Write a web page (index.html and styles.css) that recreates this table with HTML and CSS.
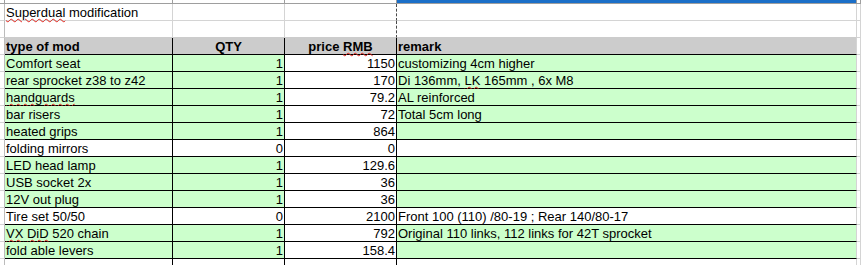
FILE: index.html
```html
<!DOCTYPE html>
<html>
<head>
<meta charset="utf-8">
<link rel="stylesheet" href="styles.css">
</head>
<body>
<div class="sheet">
  <div class="row top">
    <div class="cell gut"></div>
    <div class="cell ca"></div>
    <div class="cell cb"></div>
    <div class="cell cc brk"></div>
    <div class="cell cd sel"></div>
    <div class="cell ce"></div>
  </div>
  <div class="row">
    <div class="cell gut"></div>
    <div class="cell ca"><span class="sp">Superdual</span>&nbsp;modification</div>
    <div class="cell cb"></div>
    <div class="cell cc brk"></div>
    <div class="cell cd"></div>
    <div class="cell ce"></div>
  </div>
  <div class="row pre">
    <div class="cell gut"></div>
    <div class="cell ca"></div>
    <div class="cell cb"></div>
    <div class="cell cc brk"></div>
    <div class="cell cd"></div>
    <div class="cell ce"></div>
  </div>
  <div class="row hd">
    <div class="cell gut"></div>
    <div class="cell ca">type of mod</div>
    <div class="cell cb ctr">QTY</div>
    <div class="cell cc ctr">price&nbsp;<span class="sp">RMB</span></div>
    <div class="cell cd">remark</div>
    <div class="cell ce"></div>
  </div>
  <div class="row dr g">
    <div class="cell gut"></div>
    <div class="cell ca">Comfort seat</div>
    <div class="cell cb num">1</div>
    <div class="cell cc num">1150</div>
    <div class="cell cd">customizing 4cm higher</div>
    <div class="cell ce"></div>
  </div>
  <div class="row dr g">
    <div class="cell gut"></div>
    <div class="cell ca">rear sprocket z38 to z42</div>
    <div class="cell cb num">1</div>
    <div class="cell cc num">170</div>
    <div class="cell cd">Di 136mm,&nbsp;<span class="sp">LK</span>&nbsp;165mm , 6x M8</div>
    <div class="cell ce"></div>
  </div>
  <div class="row dr g">
    <div class="cell gut"></div>
    <div class="cell ca"><span class="sp">handguards</span></div>
    <div class="cell cb num">1</div>
    <div class="cell cc num">79.2</div>
    <div class="cell cd">AL reinforced</div>
    <div class="cell ce"></div>
  </div>
  <div class="row dr g">
    <div class="cell gut"></div>
    <div class="cell ca">bar risers</div>
    <div class="cell cb num">1</div>
    <div class="cell cc num">72</div>
    <div class="cell cd">Total 5cm long</div>
    <div class="cell ce"></div>
  </div>
  <div class="row dr g">
    <div class="cell gut"></div>
    <div class="cell ca">heated grips</div>
    <div class="cell cb num">1</div>
    <div class="cell cc num">864</div>
    <div class="cell cd"></div>
    <div class="cell ce"></div>
  </div>
  <div class="row dr">
    <div class="cell gut"></div>
    <div class="cell ca">folding mirrors</div>
    <div class="cell cb num">0</div>
    <div class="cell cc num">0</div>
    <div class="cell cd"></div>
    <div class="cell ce"></div>
  </div>
  <div class="row dr g">
    <div class="cell gut"></div>
    <div class="cell ca">LED head lamp</div>
    <div class="cell cb num">1</div>
    <div class="cell cc num">129.6</div>
    <div class="cell cd"></div>
    <div class="cell ce"></div>
  </div>
  <div class="row dr g">
    <div class="cell gut"></div>
    <div class="cell ca">USB socket 2x</div>
    <div class="cell cb num">1</div>
    <div class="cell cc num">36</div>
    <div class="cell cd"></div>
    <div class="cell ce"></div>
  </div>
  <div class="row dr g">
    <div class="cell gut"></div>
    <div class="cell ca">12V out plug</div>
    <div class="cell cb num">1</div>
    <div class="cell cc num">36</div>
    <div class="cell cd"></div>
    <div class="cell ce"></div>
  </div>
  <div class="row dr">
    <div class="cell gut"></div>
    <div class="cell ca">Tire set 50/50</div>
    <div class="cell cb num">0</div>
    <div class="cell cc num">2100</div>
    <div class="cell cd">Front 100 (110) /80-19 ; Rear 140/80-17</div>
    <div class="cell ce"></div>
  </div>
  <div class="row dr g">
    <div class="cell gut"></div>
    <div class="cell ca"><span class="sp">VX</span>&nbsp;<span class="sp">DiD</span>&nbsp;520 chain</div>
    <div class="cell cb num">1</div>
    <div class="cell cc num">792</div>
    <div class="cell cd">Original 110 links, 112 links for 42T sprocket</div>
    <div class="cell ce"></div>
  </div>
  <div class="row dr g">
    <div class="cell gut"></div>
    <div class="cell ca">fold able levers</div>
    <div class="cell cb num">1</div>
    <div class="cell cc num">158.4</div>
    <div class="cell cd"></div>
    <div class="cell ce"></div>
  </div>
  <div class="row post">
    <div class="cell gut"></div>
    <div class="cell ca"></div>
    <div class="cell cb"></div>
    <div class="cell cc"></div>
    <div class="cell cd"></div>
    <div class="cell ce"></div>
  </div>
</div>
</body>
</html>
```
FILE: styles.css
```css
html, body {
  margin: 0;
  padding: 0;
  background: #ffffff;
  overflow: hidden;
}
body {
  font-family: "Liberation Sans", Arial, sans-serif;
  font-size: 13px;
  color: #000000;
}
.sheet {
  display: flex;
  flex-direction: column;
}
.row {
  display: flex;
  height: 17px;
  flex: none;
}
.row.top {
  height: 4px;
}
.cell {
  box-sizing: border-box;
  border-right: 1px solid #d4d4d4;
  border-bottom: 1px solid #d4d4d4;
  padding: 0 1px;
  display: flex;
  align-items: flex-end;
  line-height: 15px;
  white-space: nowrap;
  overflow: visible;
  flex: none;
}
.gut { width: 5px; padding: 0; border-right-color: #bcbcbc; }
.ca { width: 168px; }
.cb { width: 112px; }
.cc { width: 112px; }
.cd { width: 460px; }
.ce { flex: 1 1 auto; }

.ctr { justify-content: center; }
.num { justify-content: flex-end; }

/* top partial row (column header edge) */
.row.top .cell {
  border-bottom-color: #9e9e9e;
  border-right-color: #9e9e9e;
}
.row.top .sel {
  background: #1b6fc8;
}
.brk {
  border-right: 1px dashed #4a4a4a;
}

/* row before header: its bottom line is hidden by the header fill */
.row.pre .ca, .row.pre .cb, .row.pre .cc, .row.pre .cd {
  border-bottom-color: #cccccc;
}

/* header */
.row.hd .ca, .row.hd .cb, .row.hd .cc, .row.hd .cd {
  background: #cccccc;
  font-weight: bold;
  border-bottom-color: #000000;
}
.row.hd .ca, .row.hd .cb, .row.hd .cc {
  border-right-color: #000000;
}

/* data rows */
.row.dr .ca, .row.dr .cb, .row.dr .cc, .row.dr .cd {
  border-bottom-color: #000000;
}
.row.dr .ca, .row.dr .cb, .row.dr .cc {
  border-right-color: #000000;
}
.row.g .ca, .row.g .cb, .row.g .cd {
  background: #ccffcc;
}

.row.post .ca, .row.post .cb, .row.post .cc {
  border-right-color: #000000;
}

.sp {
  text-decoration: underline wavy #e0241c;
  text-decoration-thickness: 1px;
  text-underline-offset: 1px;
}
```
